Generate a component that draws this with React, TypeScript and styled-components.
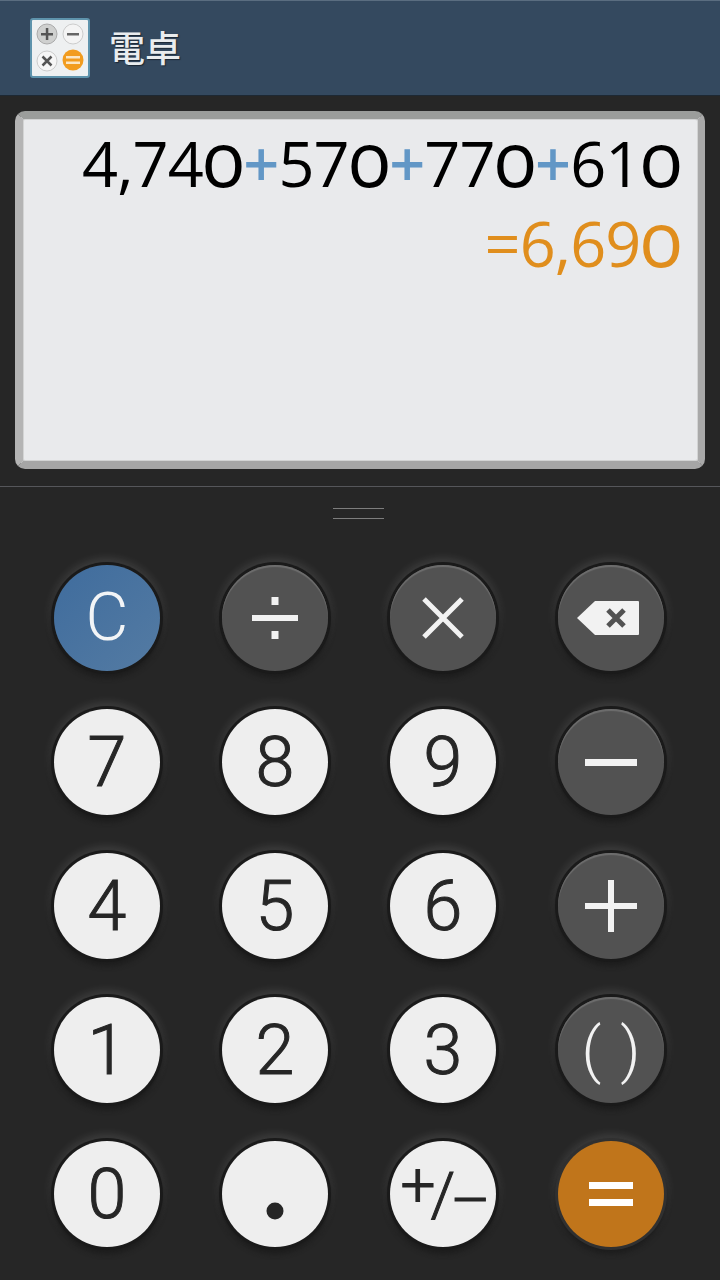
import React from "react"
import styled, { createGlobalStyle } from "styled-components"

const GlobalStyle = createGlobalStyle`
  html, body {
    margin: 0;
    padding: 0;
    background: #262626;
  }
`

const Page = styled.div`
  width: 720px;
  height: 1280px;
  display: flex;
  flex-direction: column;
  overflow: hidden;
  background: #262626;
`

const Header = styled.header`
  height: 96px;
  box-sizing: border-box;
  padding: 2px 0 2px 30px;
  display: flex;
  align-items: center;
  gap: 20px;
  background: #34495f;
  border-top: 1px solid #5a6d80;
  border-bottom: 1px solid #1d2833;
`

const Title = styled.h1`
  margin: 0 0 4px -1px;
  color: #e9ecee;
  font-family: "Noto Sans CJK JP", sans-serif;
  font-size: 36px;
  font-weight: 500;
  line-height: 1;
  text-shadow: 1px 1px 1px #1c2733;
`

const DisplayArea = styled.div`
  height: 391px;
  box-sizing: border-box;
  padding: 15px 15px 0;
  border-bottom: 1px solid #55565a;
`

const Display = styled.section`
  height: 358px;
  box-sizing: border-box;
  padding: 4px 17px 0 0;
  border-style: solid;
  border-width: 8px 7px 8px 8px;
  border-color: #9b9d9b #a9a9a9 #a6a6a6 #b4b4b4;
  border-radius: 10px;
  background: #e9eaec;
  box-shadow: inset 0 0 0 1px #d3d4d4;
  font-family: "Open Sans", sans-serif;
  font-size: 63px;
  letter-spacing: -0.9px;
  text-align: right;
  white-space: nowrap;
`

const Expression = styled.div`
  line-height: 80px;
  color: #000;
`

const Operator = styled.span`
  color: #6297c6;
  font-weight: 600;
`

const Result = styled.div`
  line-height: 80px;
  color: #e08e1d;
`

const Zero = styled.span`
  display: inline-block;
  font-size: 76px;
  line-height: 56px;
  font-variant-numeric: oldstyle-nums;
`

const Handle = styled.div`
  width: 51px;
  height: 11px;
  margin: 21px 0 0 333px;
  box-sizing: border-box;
  border-top: 1px solid #7d7d7d;
  border-bottom: 1px solid #7d7d7d;
`

const Keypad = styled.div`
  margin: 27px 0 0 23px;
  display: grid;
  grid-template-columns: repeat(4, 168px);
  grid-auto-rows: 144px;
`

const TONES = {
  clear: { bg: "linear-gradient(135deg, #3f6c9d, #547ba3)", fg: "#f2f4f6", ring: "#1a1a1a", rim: "transparent" },
  op: { bg: "#525252", fg: "#f2f2f2", ring: "#1a1a1a", rim: "#6e6e6e" },
  num: { bg: "#eeeeee", fg: "#262626", ring: "#1a1a1a", rim: "transparent" },
  equals: { bg: "#c0751b", fg: "#fff", ring: "#303030", rim: "transparent" },
}

type Tone = keyof typeof TONES

const Key = styled.button<{ $tone: Tone }>`
  justify-self: center;
  align-self: center;
  width: 106px;
  height: 106px;
  padding: 0;
  border: none;
  border-radius: 50%;
  display: flex;
  align-items: center;
  justify-content: center;
  background: ${({ $tone }) => TONES[$tone].bg};
  color: ${({ $tone }) => TONES[$tone].fg};
  font-family: Roboto, sans-serif;
  font-size: 70px;
  font-weight: 300;
  line-height: 1;
  -webkit-text-stroke: ${({ $tone }) => ($tone === "num" ? "1px" : "0")};
  box-shadow:
    inset 0 2px 1px ${({ $tone }) => TONES[$tone].rim},
    0 0 0 3px ${({ $tone }) => TONES[$tone].ring},
    0 4px 5px 3px #1c1c1c,
    0 -3px 10px 3px rgba(255, 255, 255, 0.13);
`

const ClearLabel = styled.span`
  font-size: 66px;
`

const SignLabel = styled.span`
  display: flex;
  align-items: center;
  margin-top: 2px;
  font-size: 62px;
  letter-spacing: -5px;
`

const Sup = styled.span`
  position: relative;
  top: -10px;
`

const Sub = styled.span`
  position: relative;
  top: 6px;
`

const Parens = styled.span`
  font-size: 62px;
  word-spacing: 4px;
`

const Glyph = styled.svg<{ $shift?: number }>`
  display: block;
  margin-right: ${({ $shift }) => $shift ?? 0}px;
`

const AppIcon = () => (
  <Glyph width="60" height="60" viewBox="0 0 60 60" aria-label="Calculator">
    <rect x="1" y="1" width="58" height="58" rx="2" fill="#eef0f1" stroke="#5e93ac" strokeWidth="2" />
    <circle cx="17" cy="16" r="10" fill="#cfd0cf" stroke="#aaa" />
    <rect x="11" y="15" width="12" height="2.5" fill="#555" />
    <rect x="15.8" y="10" width="2.5" height="12" fill="#555" />
    <circle cx="43" cy="16" r="10" fill="#f4f4f4" stroke="#ccc" />
    <rect x="37" y="15" width="12" height="2.5" fill="#666" />
    <circle cx="17" cy="43" r="10" fill="#f6f6f6" stroke="#ccc" />
    <path d="M12.5 38.5l9 9M21.5 38.5l-9 9" stroke="#555" strokeWidth="2.5" />
    <circle cx="43" cy="42" r="10.5" fill="#f29c1f" />
    <rect x="36" y="38" width="14" height="2.5" fill="#fbe6c4" />
    <rect x="36" y="43.5" width="14" height="2.5" fill="#fbe6c4" />
  </Glyph>
)

const DivideIcon = () => (
  <Glyph width="46" height="42" viewBox="0 0 46 42">
    <rect x="0" y="18" width="46" height="6" fill="currentColor" />
    <rect x="19.5" y="0" width="7" height="8" fill="currentColor" />
    <rect x="19.5" y="34" width="7" height="8" fill="currentColor" />
  </Glyph>
)

const TimesIcon = () => (
  <Glyph width="42" height="42" viewBox="0 0 42 42">
    <path d="M2 2l38 38M40 2L2 40" stroke="currentColor" strokeWidth="5" />
  </Glyph>
)

const BackspaceIcon = () => (
  <Glyph $shift={6} width="62" height="34" viewBox="0 0 62 34">
    <path d="M18 0h43a1 1 0 0 1 1 1v32a1 1 0 0 1-1 1H18L0 17z" fill="currentColor" />
    <path d="M31 9l16 16M47 9L31 25" stroke="#525252" strokeWidth="5" />
  </Glyph>
)

const MinusIcon = () => (
  <Glyph width="52" height="7" viewBox="0 0 52 7">
    <rect width="52" height="7" fill="currentColor" />
  </Glyph>
)

const PlusIcon = () => (
  <Glyph width="52" height="52" viewBox="0 0 52 52">
    <rect y="23" width="52" height="6" fill="currentColor" />
    <rect x="23" width="6" height="52" fill="currentColor" />
  </Glyph>
)

const EqualsIcon = () => (
  <Glyph width="44" height="24" viewBox="0 0 44 24">
    <rect width="44" height="7" fill="currentColor" />
    <rect y="17" width="44" height="7" fill="currentColor" />
  </Glyph>
)

const DotIcon = () => (
  <Glyph width="18" height="52" viewBox="0 0 18 52">
    <circle cx="9" cy="43" r="8.5" fill="currentColor" />
  </Glyph>
)

const KEYS: { tone: Tone; label: React.ReactNode }[] = [
  { tone: "clear", label: <ClearLabel>C</ClearLabel> },
  { tone: "op", label: <DivideIcon /> },
  { tone: "op", label: <TimesIcon /> },
  { tone: "op", label: <BackspaceIcon /> },
  { tone: "num", label: "7" },
  { tone: "num", label: "8" },
  { tone: "num", label: "9" },
  { tone: "op", label: <MinusIcon /> },
  { tone: "num", label: "4" },
  { tone: "num", label: "5" },
  { tone: "num", label: "6" },
  { tone: "op", label: <PlusIcon /> },
  { tone: "num", label: "1" },
  { tone: "num", label: "2" },
  { tone: "num", label: "3" },
  { tone: "op", label: <Parens>( )</Parens> },
  { tone: "num", label: "0" },
  { tone: "num", label: <DotIcon /> },
  {
    tone: "num",
    label: (
      <SignLabel>
        <Sup>+</Sup>/<Sub>–</Sub>
      </SignLabel>
    ),
  },
  { tone: "equals", label: <EqualsIcon /> },
]

export default function App() {
  return (
    <Page>
      <GlobalStyle />
      <Header>
        <AppIcon />
        <Title>電卓</Title>
      </Header>
      <DisplayArea>
        <Display>
          <Expression>
            4,74<Zero>0</Zero>
            <Operator>+</Operator>57<Zero>0</Zero>
            <Operator>+</Operator>77<Zero>0</Zero>
            <Operator>+</Operator>61<Zero>0</Zero>
          </Expression>
          <Result>
            =6,69<Zero>0</Zero>
          </Result>
        </Display>
      </DisplayArea>
      <Handle />
      <Keypad>
        {KEYS.map((key, i) => (
          <Key key={i} $tone={key.tone}>
            {key.label}
          </Key>
        ))}
      </Keypad>
    </Page>
  )
}
